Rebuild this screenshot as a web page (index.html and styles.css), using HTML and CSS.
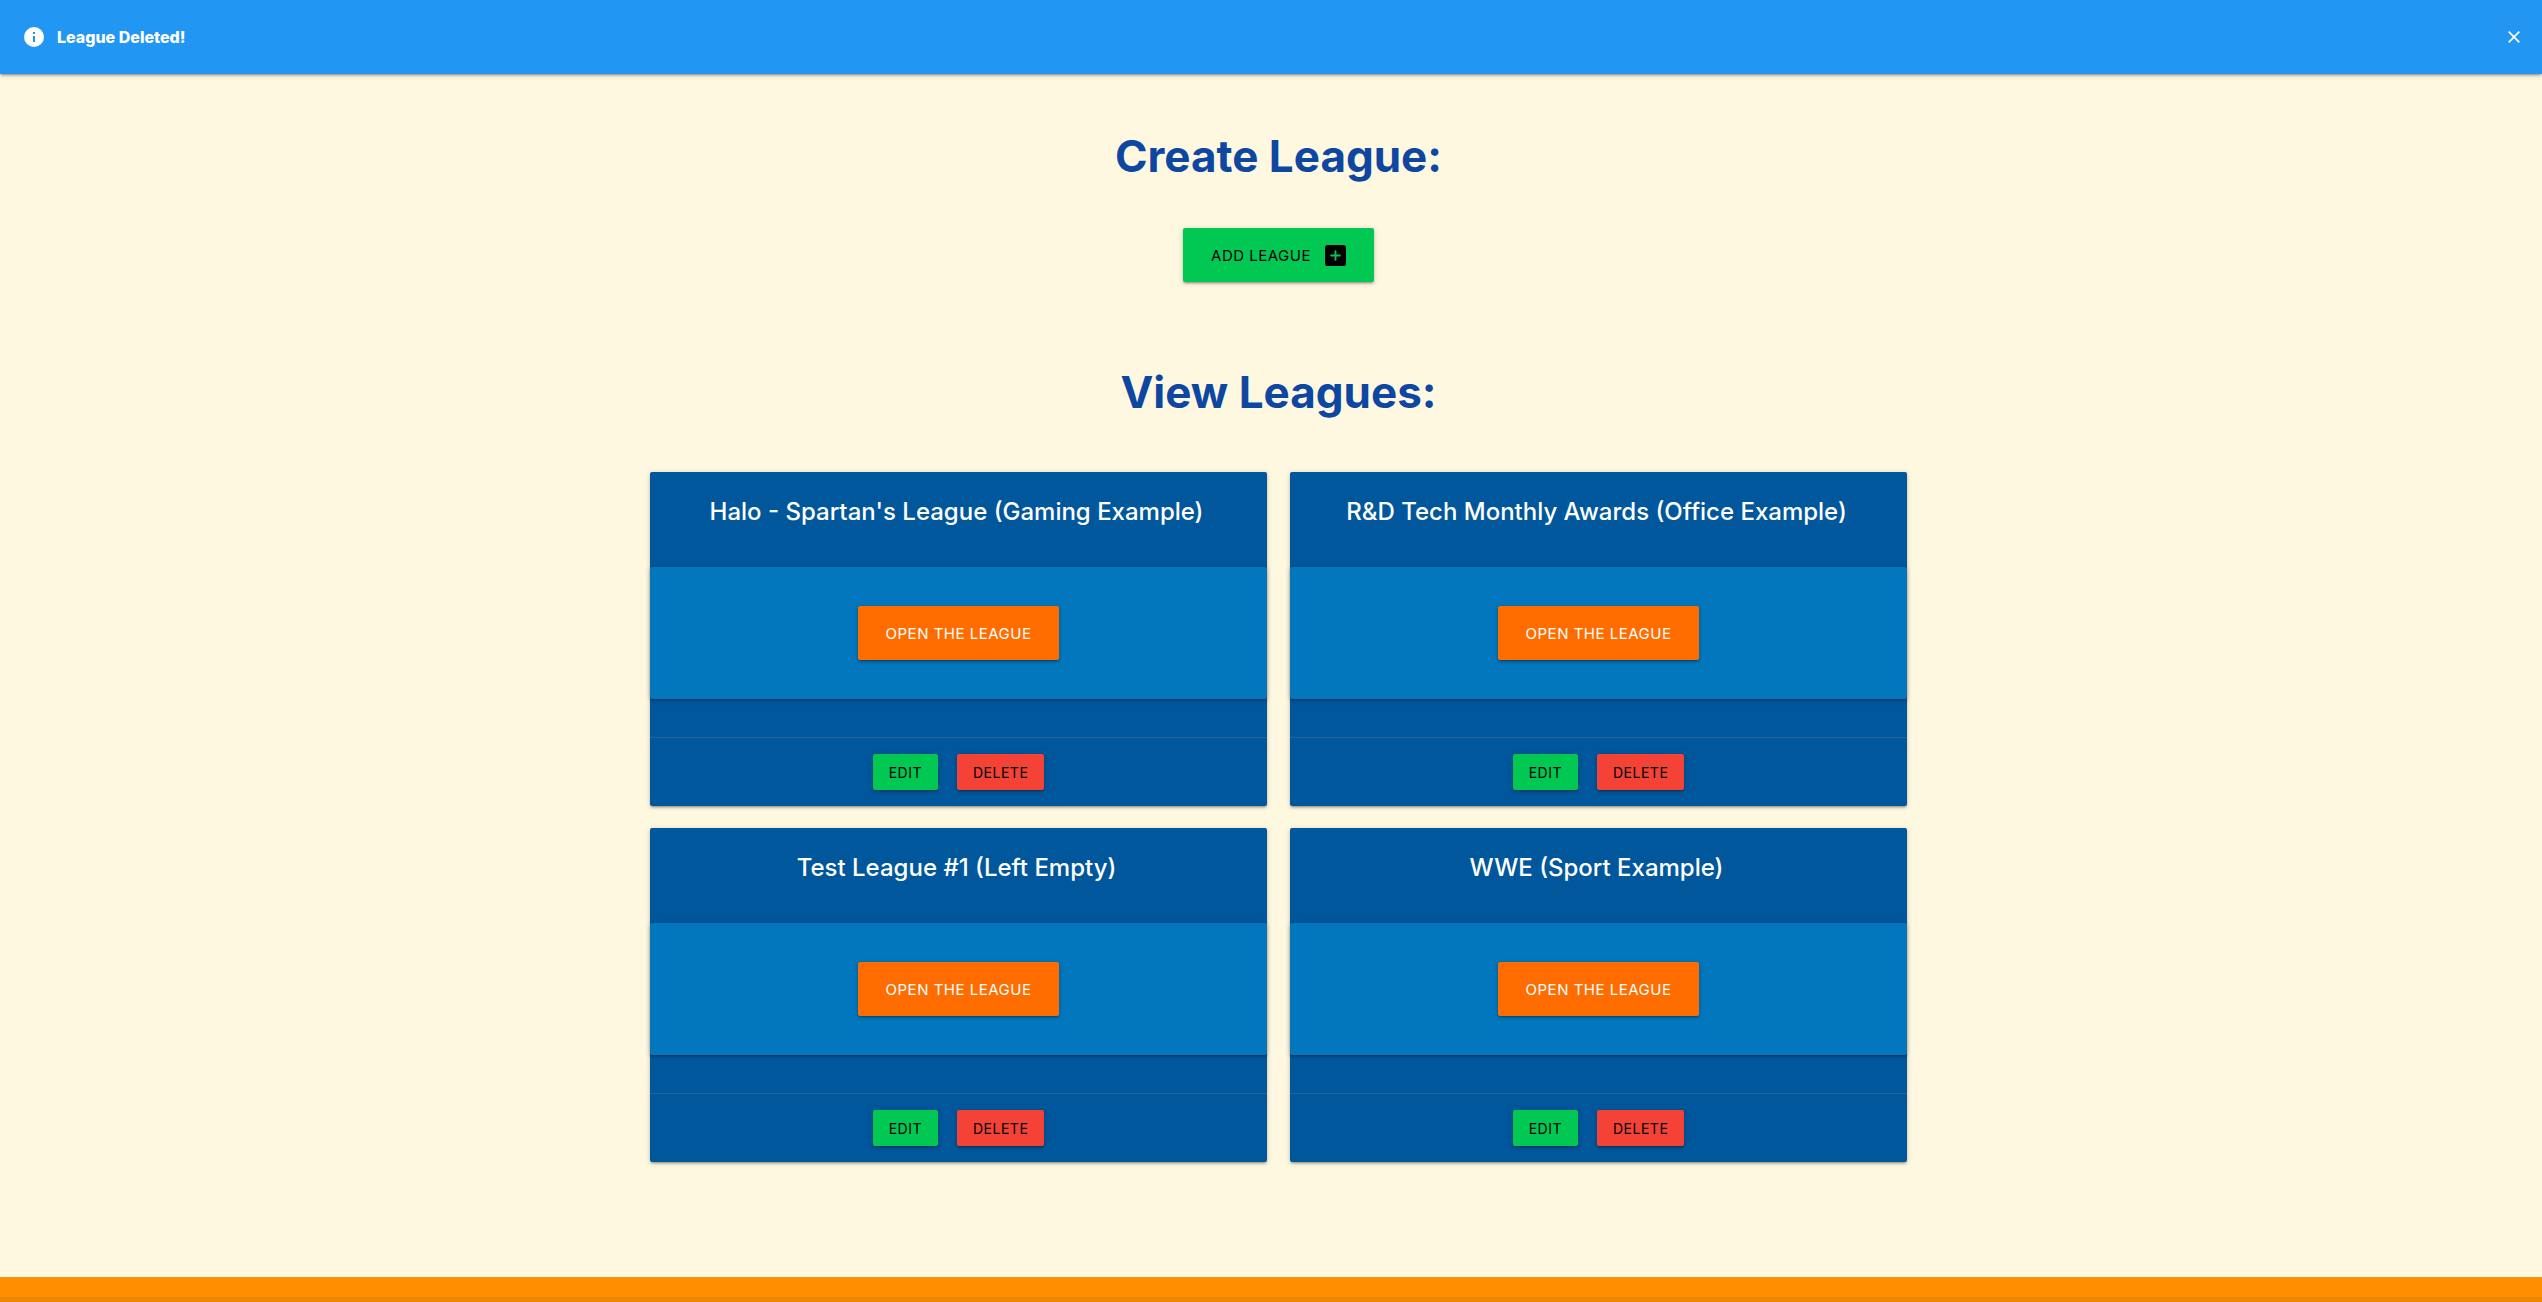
FILE: index.html
```html
<!DOCTYPE html>
<html lang="en">
<head>
<meta charset="utf-8">
<title>Leagues</title>
<link rel="stylesheet" href="styles.css">
</head>
<body>
<div class="flash" role="status">
  <svg class="flash-icon" viewBox="0 0 20 20" aria-hidden="true"><path fill="currentColor" fill-rule="evenodd" d="M10 0a10 10 0 1 0 0 20a10 10 0 0 0 0-20zM9 5h2v2H9zM9 9h2v6H9z"/></svg>
  <span class="flash-text">League Deleted!</span>
  <button class="flash-close" type="button" aria-label="Close">
    <svg viewBox="0 0 12 12" aria-hidden="true"><path d="M.7.7l10.6 10.6M11.3.7L.7 11.3" stroke="currentColor" stroke-width="1.7" fill="none"/></svg>
  </button>
</div>
<main class="page">
  <h1 class="heading">Create League:</h1>
  <button class="btn btn-large green" type="button">Add League
    <svg class="btn-icon" viewBox="0 0 22 22" aria-hidden="true"><rect width="22" height="22" rx="3" fill="currentColor"/><path d="M11 6.500v9M6.500 11h9" stroke="#00c853" stroke-width="2" stroke-linecap="round"/></svg>
  </button>
  <h2 class="heading heading-view">View Leagues:</h2>
  <div class="leagues">
    <article class="card">
      <h3 class="card-title">Halo - Spartan's League (Gaming Example)</h3>
      <div class="card-panel"><button class="btn btn-large orange" type="button">Open the League</button></div>
      <div class="card-action"><button class="btn green" type="button">Edit</button><button class="btn red" type="button">Delete</button></div>
    </article>
    <article class="card">
      <h3 class="card-title">R&amp;D Tech Monthly Awards (Office Example)</h3>
      <div class="card-panel"><button class="btn btn-large orange" type="button">Open the League</button></div>
      <div class="card-action"><button class="btn green" type="button">Edit</button><button class="btn red" type="button">Delete</button></div>
    </article>
    <article class="card">
      <h3 class="card-title">Test League #1 (Left Empty)</h3>
      <div class="card-panel"><button class="btn btn-large orange" type="button">Open the League</button></div>
      <div class="card-action"><button class="btn green" type="button">Edit</button><button class="btn red" type="button">Delete</button></div>
    </article>
    <article class="card">
      <h3 class="card-title">WWE (Sport Example)</h3>
      <div class="card-panel"><button class="btn btn-large orange" type="button">Open the League</button></div>
      <div class="card-action"><button class="btn green" type="button">Edit</button><button class="btn red" type="button">Delete</button></div>
    </article>
  </div>
</main>
<footer class="footer"><div class="footer-strip"></div></footer>
</body>
</html>
```
FILE: styles.css
```css
:root {
  --shadow: 0 2px 2px 0 rgba(0, 0, 0, .14), 0 3px 1px -2px rgba(0, 0, 0, .12), 0 1px 5px 0 rgba(0, 0, 0, .2);
}
* { box-sizing: border-box; }
body {
  margin: 0;
  min-height: 100vh;
  display: flex;
  flex-direction: column;
  background: #fff8e1;
  font-family: Inter, "Liberation Sans", sans-serif;
}
.flash {
  display: flex;
  align-items: center;
  height: 74px;
  padding: 0 22px 0 24px;
  background: #2196f3;
  color: #fff;
  box-shadow: var(--shadow);
}
.flash-icon { width: 20px; height: 20px; }
.flash-text { margin-left: 13px; font-size: 16px; font-weight: 800; }
.flash-close {
  display: flex;
  margin-left: auto;
  padding: 0;
  border: 0;
  background: none;
  color: inherit;
}
.flash-close svg { width: 12px; height: 12px; }
.page {
  display: flex;
  flex-direction: column;
  align-items: center;
  padding: 58px 0 115px 15px;
}
.heading {
  margin: 0 0 48px;
  font-size: 44px;
  line-height: 48px;
  font-weight: 700;
  color: #0d47a1;
}
.heading-view { margin-top: 86px; margin-bottom: 56px; }
.btn {
  display: inline-flex;
  align-items: center;
  justify-content: center;
  height: 36px;
  padding: 0 16px;
  border: 0;
  border-radius: 2px;
  box-shadow: var(--shadow);
  font-family: inherit;
  font-size: 14px;
  letter-spacing: .5px;
  text-transform: uppercase;
  white-space: nowrap;
  color: #000;
}
.btn-large { height: 54px; padding: 0 28px; font-size: 15px; }
.btn-icon { width: 21px; height: 21px; margin-left: 14px; }
.green { background: #00c853; }
.red { background: #f44336; }
.orange { background: #ff6d00; color: #fff; }
.leagues {
  display: grid;
  grid-template-columns: 1fr 1fr;
  gap: 22px 23px;
  width: 70%;
  max-width: 1257px;
}
.card {
  border-radius: 2px;
  background: #01579b;
  box-shadow: var(--shadow);
}
.card-title {
  margin: 0;
  padding: 24px 28px 39px 24px;
  font-size: 24px;
  line-height: 32px;
  font-weight: 500;
  text-align: center;
  color: #fff;
}
.card-panel {
  display: flex;
  justify-content: center;
  margin-bottom: 38px;
  padding: 39px 24px;
  border-radius: 2px;
  background: #0277bd;
  box-shadow: var(--shadow);
}
.card-action {
  display: flex;
  justify-content: center;
  gap: 19px;
  padding: 16px 24px;
  border-top: 1px solid rgba(160, 160, 160, .2);
}
.footer {
  flex: 1;
  display: flex;
  flex-direction: column;
  padding-top: 20px;
  background: #ff8f00;
}
.footer-strip { flex: 1; min-height: 5px; background: rgba(51, 51, 51, .08); }
```
